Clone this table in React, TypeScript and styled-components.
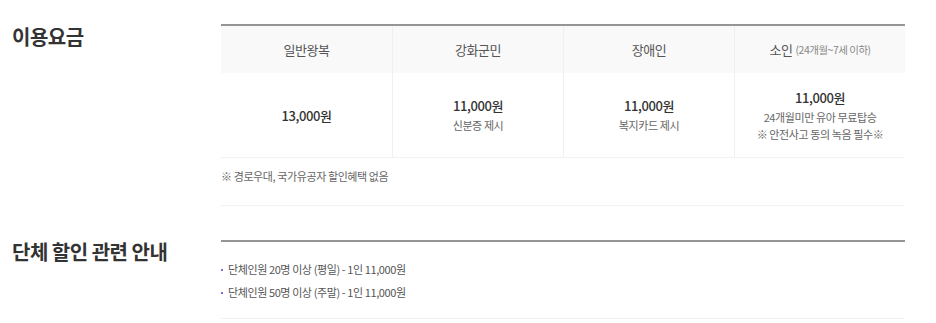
import styled, { createGlobalStyle } from "styled-components";

const GlobalStyle = createGlobalStyle`
  html, body {
    margin: 0;
    padding: 0;
    background: #fff;
  }
  body {
    font-family: "Noto Sans CJK KR", "Noto Sans", sans-serif;
    color: #333;
  }
  * {
    box-sizing: border-box;
  }
`;

interface Fare {
  label: string;
  extra?: string;
  price: string;
  notes: string[];
}

const fares: Fare[] = [
  { label: "일반왕복", price: "13,000원", notes: [] },
  { label: "강화군민", price: "11,000원", notes: ["신분증 제시"] },
  { label: "장애인", price: "11,000원", notes: ["복지카드 제시"] },
  {
    label: "소인",
    extra: "(24개월~7세 이하)",
    price: "11,000원",
    notes: ["24개월미만 유아 무료탑승", "※ 안전사고 동의 녹음 필수※"],
  },
];

const groupRules = [
  "단체인원 20명 이상 (평일) - 1인 11,000원",
  "단체인원 50명 이상 (주말) - 1인 11,000원",
];

export default function App() {
  return (
    <>
      <GlobalStyle />
      <Page>
        <Section>
          <SectionTitle $top={-1}>이용요금</SectionTitle>
          <SectionBody>
            <FareTable>
              <HeadRow>
                {fares.map((f) => (
                  <HeadCell key={f.label}>
                    {f.label}
                    {f.extra && <HeadExtra>{f.extra}</HeadExtra>}
                  </HeadCell>
                ))}
              </HeadRow>
              <BodyRow>
                {fares.map((f) => (
                  <BodyCell key={f.label}>
                    <Price>{f.price}</Price>
                    {f.notes.map((n) => (
                      <Note key={n}>{n}</Note>
                    ))}
                  </BodyCell>
                ))}
              </BodyRow>
            </FareTable>
            <Notice>※ 경로우대, 국가유공자 할인혜택 없음</Notice>
          </SectionBody>
        </Section>

        <Section $gap={34}>
          <SectionTitle $top={-2}>단체 할인 관련 안내</SectionTitle>
          <SectionBody>
            <RuleList>
              {groupRules.map((r) => (
                <RuleItem key={r}>{r}</RuleItem>
              ))}
            </RuleList>
          </SectionBody>
        </Section>
      </Page>
    </>
  );
}

const Page = styled.div`
  width: 936px;
  padding-top: 24px;
`;

const Section = styled.section<{ $gap?: number }>`
  display: grid;
  grid-template-columns: 221px 684px;
  margin-top: ${(p) => p.$gap ?? 0}px;
`;

const SectionTitle = styled.h2<{ $top: number }>`
  margin: ${(p) => p.$top}px 0 0 12px;
  font-size: 20px;
  line-height: 28px;
  font-weight: 700;
  color: #333;
  letter-spacing: -0.5px;
`;

const SectionBody = styled.div`
  border-top: 2px solid #959595;
`;

const FareTable = styled.div`
  display: flex;
  flex-direction: column;
`;

const HeadRow = styled.div`
  display: grid;
  grid-template-columns: repeat(4, 1fr);
  height: 47px;
  background: #f9f9f9;
`;

const HeadCell = styled.div`
  display: flex;
  align-items: center;
  justify-content: center;
  font-size: 13px;
  color: #555;
  letter-spacing: -0.4px;
  & + & {
    border-left: 1px solid #f0f0f0;
  }
`;

const HeadExtra = styled.span`
  margin-left: 3px;
  font-size: 10.5px;
  color: #888;
  letter-spacing: -0.5px;
`;

const BodyRow = styled.div`
  display: grid;
  grid-template-columns: repeat(4, 1fr);
  height: 85px;
  border-bottom: 1px solid #f2f2f2;
`;

const BodyCell = styled.div`
  display: flex;
  flex-direction: column;
  align-items: center;
  justify-content: center;
  text-align: center;
  & + & {
    border-left: 1px solid #f0f0f0;
  }
`;

const Price = styled.div`
  font-size: 13px;
  line-height: 19px;
  font-weight: 500;
  color: #333;
  letter-spacing: -0.4px;
  & + div {
    margin-top: 2px;
  }
`;

const Note = styled.div`
  font-size: 11px;
  line-height: 17px;
  color: #666;
  letter-spacing: -0.4px;
`;

const Notice = styled.div`
  height: 48px;
  padding-top: 10px;
  font-size: 11px;
  line-height: 17px;
  color: #666;
  letter-spacing: -0.4px;
  border-bottom: 1px solid #f2f2f2;
`;

const RuleList = styled.ul`
  list-style: none;
  margin: 0;
  padding: 16px 0 14px;
  border-bottom: 1px solid #f2f2f2;
`;

const RuleItem = styled.li`
  display: flex;
  align-items: center;
  gap: 5px;
  font-size: 11px;
  line-height: 23px;
  color: #555;
  letter-spacing: -0.4px;
  &::before {
    content: "";
    width: 2px;
    height: 2px;
    background: #7a6fd6;
  }
`;
